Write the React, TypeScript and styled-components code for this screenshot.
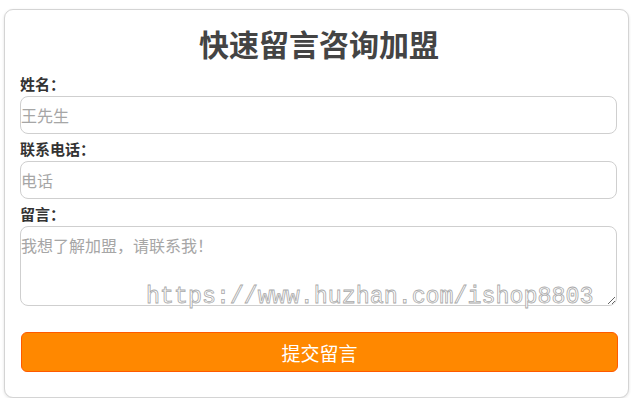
import styled, { createGlobalStyle } from 'styled-components';

const GlobalStyle = createGlobalStyle`
  html, body {
    margin: 0;
    padding: 0;
    background: #fff;
    font-family: "Noto Sans CJK SC", "Liberation Sans", sans-serif;
  }
`;

const Page = styled.div`
  padding: 9px 0 0 4px;
`;

const Card = styled.form`
  position: relative;
  box-sizing: border-box;
  width: 625px;
  height: 389px;
  border: 1px solid #d4d4d4;
  border-radius: 9px;
  box-shadow: 0 1px 3px rgba(0, 0, 0, 0.12);
  padding: 0 10px 25px 15px;
  background: #fff;
`;

const Title = styled.h2`
  margin: 0 0 6px;
  padding-top: 13px;
  height: 40px;
  line-height: 40px;
  text-align: center;
  font-size: 30px;
  font-weight: 700;
  color: #444;
`;

const Label = styled.label`
  display: block;
  padding-top: 3px;
  line-height: 24px;
  font-size: 15px;
  font-weight: 700;
  color: #333;
`;

const Field = styled.input`
  display: block;
  box-sizing: border-box;
  width: 597px;
  height: 38px;
  margin: 0;
  padding: 0;
  border: 1px solid #cfcfcf;
  border-radius: 8px;
  font-family: inherit;
  font-size: 16px;
  color: #333;
  outline: none;
  &::placeholder { color: #a6a6a6; }
`;

const Message = styled.textarea`
  display: block;
  box-sizing: border-box;
  width: 597px;
  height: 80px;
  margin: 0;
  padding: 6px 0 0;
  border: 1px solid #cfcfcf;
  border-radius: 8px;
  font-family: inherit;
  font-size: 16px;
  line-height: 24px;
  color: #333;
  outline: none;
  &::placeholder { color: #a6a6a6; }
`;

const Submit = styled.button`
  display: block;
  box-sizing: border-box;
  width: 597px;
  height: 40px;
  margin: 26px 0 0 1px;
  border: 1px solid #ff5a00;
  border-radius: 6px;
  background: #ff8800;
  color: #fff;
  font-family: inherit;
  font-size: 19px;
  cursor: pointer;
`;

const Watermark = styled.span`
  position: absolute;
  left: 141px;
  top: 272px;
  font-family: "Liberation Mono", monospace;
  font-size: 23.3px;
  line-height: 30px;
  color: #fff;
  -webkit-text-stroke: 0.8px #a9a9a9;
  pointer-events: none;
  white-space: nowrap;
`;

export default function App() {
  return (
    <Page>
      <GlobalStyle />
      <Card onSubmit={e => e.preventDefault()}>
        <Title>快速留言咨询加盟</Title>
        <Label>姓名：</Label>
        <Field placeholder="王先生" />
        <Label>联系电话：</Label>
        <Field placeholder="电话" />
        <Label>留言：</Label>
        <Message placeholder="我想了解加盟，请联系我！" />
        <Submit type="submit">提交留言</Submit>
        <Watermark>https://www.huzhan.com/ishop8803</Watermark>
      </Card>
    </Page>
  );
}
